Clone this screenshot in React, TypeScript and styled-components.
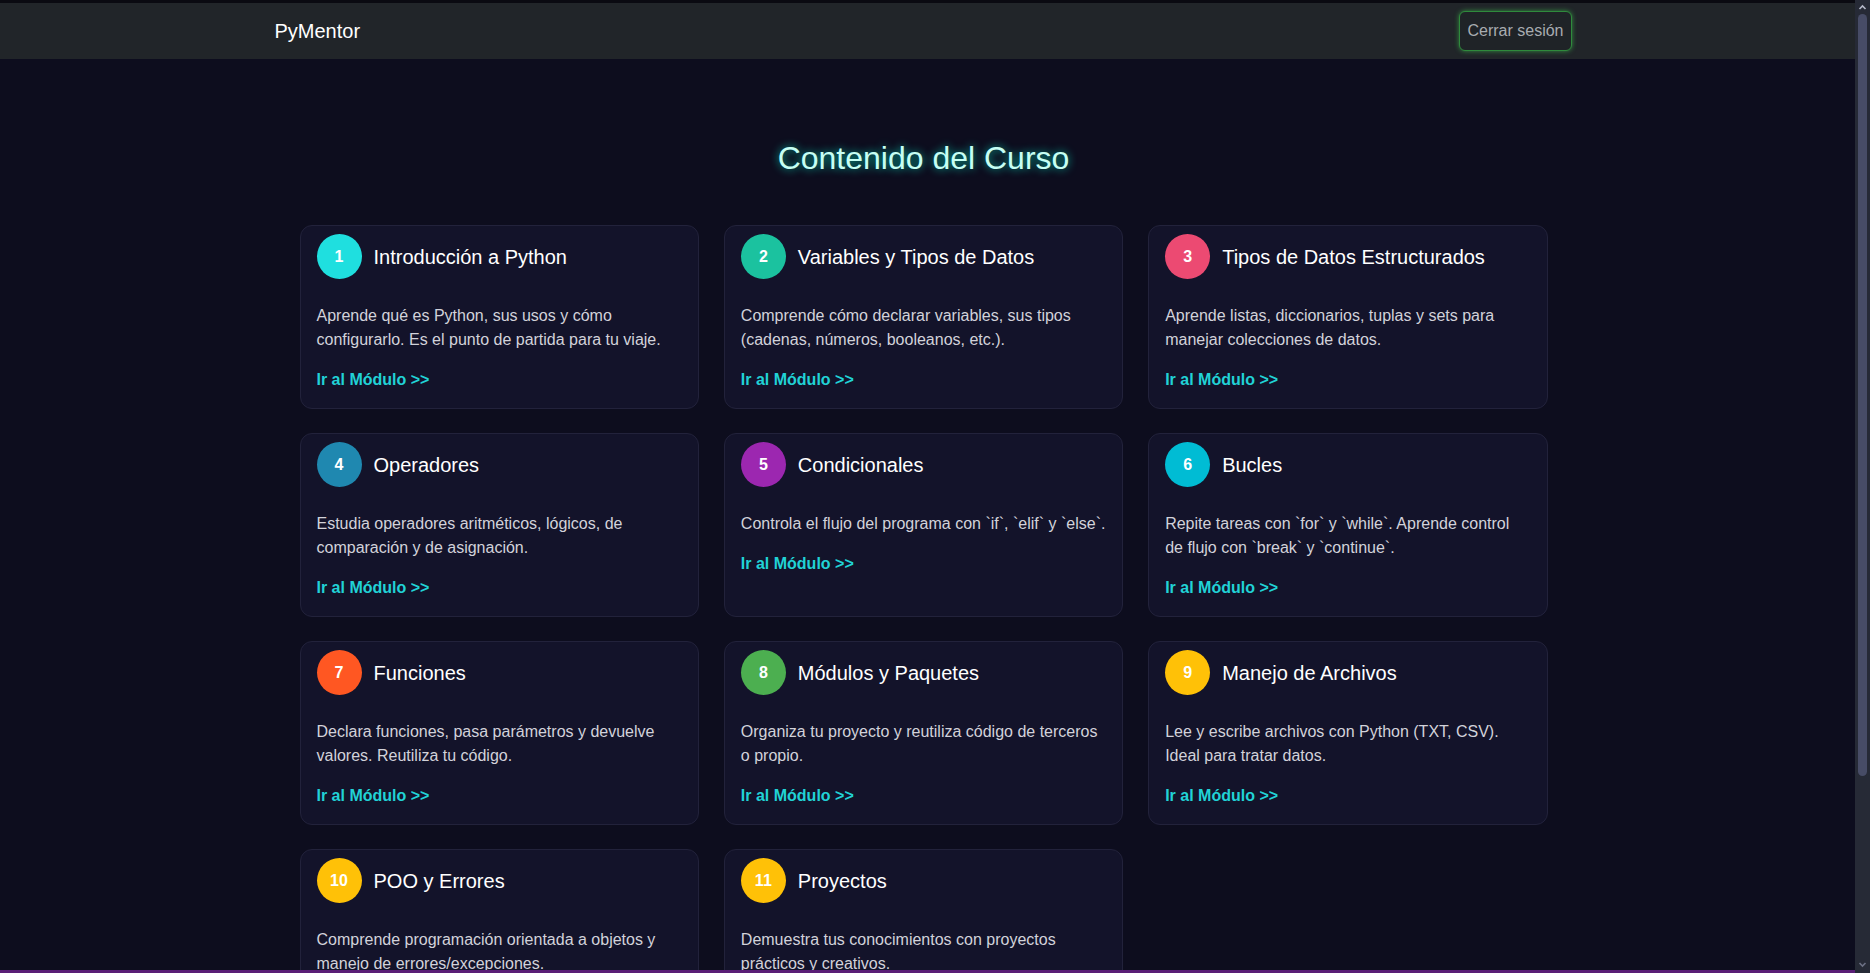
import React from "react";
import styled, { createGlobalStyle } from "styled-components";

const GlobalStyle = createGlobalStyle`
  body {
    margin: 0;
    background: #0d0d1e;
    font-family: "Liberation Sans", Arial, sans-serif;
    color: #ffffff;
  }
  * { box-sizing: border-box; }
`;

const Page = styled.div`
  margin-right: 15px;
`;

const Nav = styled.nav`
  background: #212529;
  border-top: 3px solid #0a0a11;
  height: 59px;
  padding-right: 8px;
  display: flex;
  align-items: center;
`;

const NavInner = styled.div`
  width: 100%;
  max-width: 1320px;
  margin: 0 auto;
  padding: 0 12px;
  display: flex;
  align-items: center;
  justify-content: space-between;
`;

const Brand = styled.a`
  font-size: 20px;
  line-height: 30px;
  color: #ffffff;
  text-decoration: none;
  margin-left: -1px;
`;

const LogoutButton = styled.button`
  font-family: inherit;
  font-size: 16px;
  line-height: 24px;
  padding: 7px 7px;
  background: #1f2327;
  color: #a8acb0;
  border: 1px solid #2f8a3c;
  border-radius: 6px;
  box-shadow: 0 0 5px rgba(64, 200, 80, 0.65);
  cursor: pointer;
`;

const Main = styled.main`
  padding: 80px 8px 48px 0;
`;

const Heading = styled.h1`
  margin: 0 0 48px;
  text-align: center;
  font-size: 32px;
  line-height: 38.4px;
  font-weight: 500;
  color: #c6fff4;
  text-shadow: 0 0 8px rgba(0, 255, 214, 0.75);
`;

const Grid = styled.div`
  max-width: 1248px;
  margin: 0 auto;
  display: grid;
  grid-template-columns: repeat(3, 1fr);
  gap: 24px 25px;
`;

const Card = styled.div`
  background: #13132a;
  border: 1px solid #22223b;
  border-radius: 12px;
  padding: 8px 16px 16px;
  display: flex;
  flex-direction: column;
`;

const CardHeader = styled.div`
  display: flex;
  align-items: center;
  gap: 12px;
  margin-bottom: 25px;
`;

const Badge = styled.span<{ $bg: string }>`
  width: 45px;
  height: 45px;
  border-radius: 50%;
  background: ${(p) => p.$bg};
  color: #ffffff;
  font-weight: 700;
  font-size: 16px;
  display: flex;
  align-items: center;
  justify-content: center;
  flex-shrink: 0;
`;

const CardTitle = styled.h3`
  margin: 0;
  font-size: 20px;
  line-height: 24px;
  font-weight: 400;
  color: #ffffff;
`;

const Description = styled.p`
  margin: 0 0 16px;
  font-size: 16px;
  line-height: 24px;
  color: #d2d2da;
`;

const ModuleLink = styled.a`
  font-size: 16px;
  line-height: 24px;
  font-weight: 700;
  color: #21d2d6;
  text-decoration: none;
`;

const BottomBar = styled.div`
  position: fixed;
  left: 0;
  right: 15px;
  bottom: 0;
  height: 3px;
  background: #5a1e76;
`;

const Scrollbar = styled.div`
  position: fixed;
  top: 0;
  right: 0;
  bottom: 0;
  width: 15px;
  background: #262a36;
  display: flex;
  flex-direction: column;
  align-items: center;
  padding: 3px 0 4px;
`;

const ScrollArrow = styled.svg`
  width: 9px;
  height: 8px;
  flex-shrink: 0;
`;

const ScrollTrack = styled.div`
  flex: 1;
  width: 100%;
  padding: 3px 3px 0;
`;

const ScrollThumb = styled.div`
  height: 762px;
  border-radius: 5px;
  background: #474c66;
`;

const modules = [
  { n: 1, color: "#1fdfdf", title: "Introducción a Python", desc: "Aprende qué es Python, sus usos y cómo configurarlo. Es el punto de partida para tu viaje." },
  { n: 2, color: "#1bc29f", title: "Variables y Tipos de Datos", desc: "Comprende cómo declarar variables, sus tipos (cadenas, números, booleanos, etc.)." },
  { n: 3, color: "#ec4a72", title: "Tipos de Datos Estructurados", desc: "Aprende listas, diccionarios, tuplas y sets para manejar colecciones de datos." },
  { n: 4, color: "#1f88b0", title: "Operadores", desc: "Estudia operadores aritméticos, lógicos, de comparación y de asignación." },
  { n: 5, color: "#9c27b0", title: "Condicionales", desc: "Controla el flujo del programa con `if`, `elif` y `else`." },
  { n: 6, color: "#00bcd4", title: "Bucles", desc: "Repite tareas con `for` y `while`. Aprende control de flujo con `break` y `continue`." },
  { n: 7, color: "#ff5722", title: "Funciones", desc: "Declara funciones, pasa parámetros y devuelve valores. Reutiliza tu código." },
  { n: 8, color: "#4caf50", title: "Módulos y Paquetes", desc: "Organiza tu proyecto y reutiliza código de terceros o propio." },
  { n: 9, color: "#ffc107", title: "Manejo de Archivos", desc: "Lee y escribe archivos con Python (TXT, CSV). Ideal para tratar datos." },
  { n: 10, color: "#ffc107", title: "POO y Errores", desc: "Comprende programación orientada a objetos y manejo de errores/excepciones." },
  { n: 11, color: "#ffc107", title: "Proyectos", desc: "Demuestra tus conocimientos con proyectos prácticos y creativos." },
];

export default function App() {
  return (
    <>
      <GlobalStyle />
      <Page>
        <Nav>
          <NavInner>
            <Brand href="#">PyMentor</Brand>
            <LogoutButton>Cerrar sesión</LogoutButton>
          </NavInner>
        </Nav>
        <Main>
          <Heading>Contenido del Curso</Heading>
          <Grid>
            {modules.map((m) => (
              <Card key={m.n}>
                <CardHeader>
                  <Badge $bg={m.color}>{m.n}</Badge>
                  <CardTitle>{m.title}</CardTitle>
                </CardHeader>
                <Description>{m.desc}</Description>
                <ModuleLink href="#">Ir al Módulo &gt;&gt;</ModuleLink>
              </Card>
            ))}
          </Grid>
        </Main>
      </Page>
      <BottomBar />
      <Scrollbar>
        <ScrollArrow viewBox="0 0 9 8">
          <polyline points="1.5,6 4.5,3 7.5,6" fill="none" stroke="#b4b8c8" strokeWidth="1.6" />
        </ScrollArrow>
        <ScrollTrack>
          <ScrollThumb />
        </ScrollTrack>
        <ScrollArrow viewBox="0 0 9 8">
          <polyline points="1.5,2 4.5,5 7.5,2" fill="none" stroke="#6c7084" strokeWidth="1.6" />
        </ScrollArrow>
      </Scrollbar>
    </>
  );
}
